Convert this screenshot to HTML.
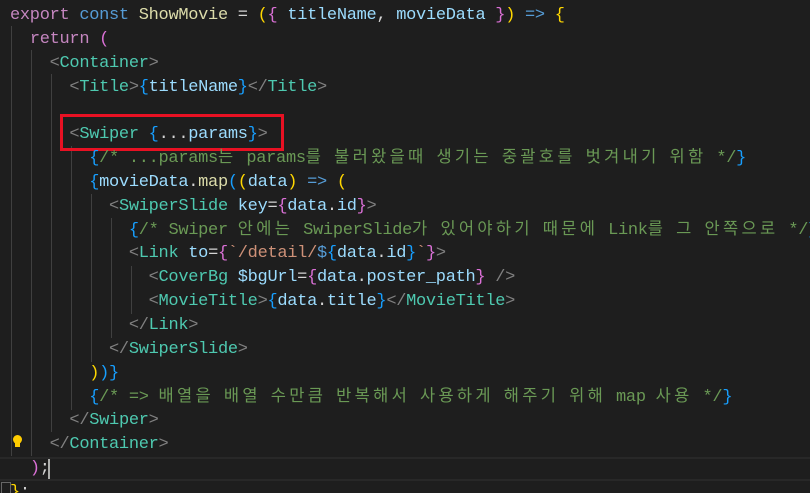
<!DOCTYPE html>
<html><head><meta charset="utf-8"><style>
html,body{margin:0;padding:0;background:#1e1e1e;width:810px;height:493px;overflow:hidden;position:relative}
pre{margin:0;position:absolute;left:10px;top:4px;font-family:"Liberation Mono","Noto Sans CJK KR",monospace;font-size:17px;letter-spacing:-0.3px;line-height:23.85px;color:#d4d4d4;white-space:pre}
pre>div{height:23.85px;overflow:visible}
.k{font-family:"Noto Sans CJK KR","NanumGothic",sans-serif;font-size:16.5px;letter-spacing:3.3px;line-height:0}
.kw{color:#c586c0}.bl{color:#569cd6}.fn{color:#dcdcaa}.v{color:#9cdcfe}.t{color:#4ec9b0}.g{color:#808080}.c{color:#6a9955}
.y{color:#ffd700}.p{color:#da70d6}.b{color:#179fff}.s{color:#ce9178}
.gl{position:absolute;width:1px;background:#404040}
</style></head><body>
<div style="position:absolute;left:0;top:457px;width:810px;height:24px;border-top:2px solid #282828;border-bottom:2px solid #282828;box-sizing:border-box"></div>
<div class="gl" style="left:11px;top:26px;height:430px"></div>
<div class="gl" style="left:31px;top:50px;height:406px"></div>
<div class="gl" style="left:51px;top:74px;height:358px"></div>
<div class="gl" style="left:71px;top:146px;height:264px"></div>
<div class="gl" style="left:91px;top:194px;height:168px"></div>
<div class="gl" style="left:111px;top:218px;height:120px"></div>
<div class="gl" style="left:131px;top:266px;height:48px"></div>
<div style="position:absolute;left:60px;top:114px;width:218px;height:31px;border:3px solid #e81123"></div>
<div style="position:absolute;left:13px;top:435px;width:9px;height:9px;border-radius:50%;background:#ffcc00"></div>
<div style="position:absolute;left:15px;top:443px;width:5px;height:4px;background:#ffcc00"></div>
<div style="position:absolute;left:48px;top:459px;width:2px;height:20px;background:#aeafad"></div>
<div style="position:absolute;left:1px;top:482px;width:10px;height:12px;border:1px solid #666;box-sizing:border-box"></div>
<pre><div><span class="kw">export</span> <span class="bl">const</span> <span class="fn">ShowMovie</span> = <span class="y">(</span><span class="p">{</span> <span class="v">titleName</span>, <span class="v">movieData</span> <span class="p">}</span><span class="y">)</span> <span class="bl">=&gt;</span> <span class="y">{</span></div><div>  <span class="kw">return</span> <span class="p">(</span></div><div>    <span class="g">&lt;</span><span class="t">Container</span><span class="g">&gt;</span></div><div>      <span class="g">&lt;</span><span class="t">Title</span><span class="g">&gt;</span><span class="b">{</span><span class="v">titleName</span><span class="b">}</span><span class="g">&lt;/</span><span class="t">Title</span><span class="g">&gt;</span></div><div> </div><div>      <span class="g">&lt;</span><span class="t">Swiper</span> <span class="b">{</span>...<span class="v">params</span><span class="b">}</span><span class="g">&gt;</span></div><div>        <span class="b">{</span><span class="c">/* ...params<span class="k">는</span> params<span class="k">를</span> <span class="k">불러왔을때</span> <span class="k">생기는</span> <span class="k">중괄호를</span> <span class="k">벗겨내기</span> <span class="k">위함</span> */</span><span class="b">}</span></div><div>        <span class="b">{</span><span class="v">movieData</span>.<span class="fn">map</span><span class="b">(</span><span class="y">(</span><span class="v">data</span><span class="y">)</span> <span class="bl">=&gt;</span> <span class="y">(</span></div><div>          <span class="g">&lt;</span><span class="t">SwiperSlide</span> <span class="v">key</span>=<span class="p">{</span><span class="v">data</span>.<span class="v">id</span><span class="p">}</span><span class="g">&gt;</span></div><div>            <span class="b">{</span><span class="c">/* Swiper <span class="k">안에는</span> SwiperSlide<span class="k">가</span> <span class="k">있어야하기</span> <span class="k">때문에</span> Link<span class="k">를</span> <span class="k">그</span> <span class="k">안쪽으로</span> */</span><span class="b">}</span></div><div>            <span class="g">&lt;</span><span class="t">Link</span> <span class="v">to</span>=<span class="p">{</span><span class="s">`/detail/</span><span class="bl">$</span><span class="b">{</span><span class="v">data</span>.<span class="v">id</span><span class="b">}</span><span class="s">`</span><span class="p">}</span><span class="g">&gt;</span></div><div>              <span class="g">&lt;</span><span class="t">CoverBg</span> <span class="v">$bgUrl</span>=<span class="p">{</span><span class="v">data</span>.<span class="v">poster_path</span><span class="p">}</span> <span class="g">/&gt;</span></div><div>              <span class="g">&lt;</span><span class="t">MovieTitle</span><span class="g">&gt;</span><span class="b">{</span><span class="v">data</span>.<span class="v">title</span><span class="b">}</span><span class="g">&lt;/</span><span class="t">MovieTitle</span><span class="g">&gt;</span></div><div>            <span class="g">&lt;/</span><span class="t">Link</span><span class="g">&gt;</span></div><div>          <span class="g">&lt;/</span><span class="t">SwiperSlide</span><span class="g">&gt;</span></div><div>        <span class="y">)</span><span class="b">)}</span></div><div>        <span class="b">{</span><span class="c">/* =&gt; <span class="k">배열을</span> <span class="k">배열</span> <span class="k">수만큼</span> <span class="k">반복해서</span> <span class="k">사용하게</span> <span class="k">해주기</span> <span class="k">위해</span> map <span class="k">사용</span> */</span><span class="b">}</span></div><div>      <span class="g">&lt;/</span><span class="t">Swiper</span><span class="g">&gt;</span></div><div>    <span class="g">&lt;/</span><span class="t">Container</span><span class="g">&gt;</span></div><div>  <span class="p">)</span>;</div><div><span class="y">}</span>;</div></pre>
</body></html>
